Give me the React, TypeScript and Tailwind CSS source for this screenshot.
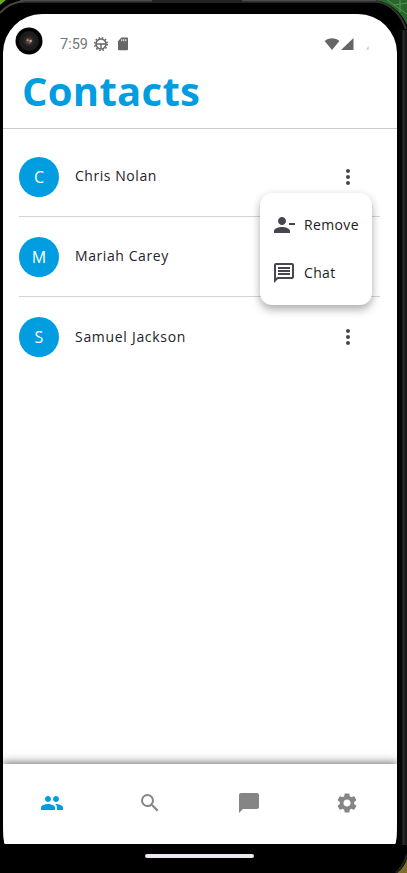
import React from "react";
import {
  MdChatBubble,
  MdMoreVert,
  MdOutlineMessage,
  MdPeople,
  MdPersonRemove,
  MdSearch,
  MdSettings,
} from "react-icons/md";

const contacts = [
  { name: "Chris Nolan", initial: "C", spacing: "tracking-[0.55px]" },
  { name: "Mariah Carey", initial: "M", spacing: "tracking-[0.58px]" },
  { name: "Samuel Jackson", initial: "S", spacing: "tracking-[0.7px]" },
];

function Camera() {
  return (
    <svg className="-ml-px block h-7 w-7 shrink-0" viewBox="0 0 28 28">
      <circle cx="14" cy="14" r="13.5" fill="#030303" />
      <circle cx="14" cy="14" r="10" fill="#1b1b1b" />
      <circle cx="14" cy="14" r="6" fill="#252526" />
      <circle cx="14" cy="14" r="3.5" fill="#483b38" />
      <circle cx="12.8" cy="13.2" r="1.2" fill="#a9806f" />
      <circle cx="15.6" cy="14" r="1.3" fill="#c9a997" />
      <circle cx="14.4" cy="15.8" r="1" fill="#7a5c50" />
    </svg>
  );
}

function StatusBar() {
  return (
    <div className="flex h-[50px] items-start pl-[13px] pt-[13px]">
      <Camera />
      <span className="ml-[17px] mt-[9px] font-['Roboto',sans-serif] text-[14.5px] leading-[18px] text-[#777]">
        7:59
      </span>
      <svg className="ml-[5px] mt-[9px] h-4 w-4" viewBox="0 0 16 16" fill="none" stroke="#666">
        <circle cx="8" cy="8" r="5" strokeWidth="1.6" />
        <circle cx="8" cy="8" r="6.3" strokeWidth="1.5" strokeDasharray="1.6 1.7" />
        <path d="M3.5 8h9M8 8v4.5" strokeWidth="1.5" />
      </svg>
      <svg className="ml-2 mt-[10px] h-[14px] w-[12px]" viewBox="0 0 12 14">
        <path d="M4.3.600H10a1 1 0 0 1 1 1v10.700a1 1 0 0 1-1 1H2a1 1 0 0 1-1-1V4.300z" fill="#666" />
        <path d="M4.800 2.200v2M6.800 2.200v2M8.800 2.200v2" stroke="#fff" strokeWidth="1" />
      </svg>
      <svg className="ml-auto mr-[26px] mt-[10px] h-[14px] w-[48px]" viewBox="0 0 48 14">
        <path d="M1.700 4C5.500.300 12.600.300 16.400 4L9 13z" fill="#666" />
        <path d="M30.500 1v12H18z" fill="#666" />
        <path d="M45.500 9v3.500h-2z" fill="#b5b5b5" />
      </svg>
    </div>
  );
}

function PopupMenu() {
  return (
    <div className="absolute left-[257px] top-[179px] flex h-28 w-28 flex-col rounded-xl bg-white py-2 text-[#1d1b20] shadow-[0_5px_8px_rgba(0,0,0,0.28),0_0_8px_rgba(0,0,0,0.07)]">
      <div className="flex h-12 items-center pl-3">
        <MdPersonRemove className="h-6 w-6 text-[#49454f]" />
        <span className="ml-2 text-[14px] font-medium leading-5 tracking-[0.35px]">Remove</span>
      </div>
      <div className="flex h-12 items-center pl-3">
        <MdOutlineMessage className="h-6 w-6 text-[#49454f]" />
        <span className="ml-2 text-[14px] font-medium leading-5 tracking-[0.35px]">Chat</span>
      </div>
    </div>
  );
}

export default function App() {
  return (
    <div className="relative h-[873px] w-[407px] overflow-hidden bg-black font-['Open_Sans','Noto_Sans',sans-serif]">
      {/* Scenery showing beyond the rounded corners of the handset */}
      <svg className="absolute inset-0" width="407" height="873">
        <defs>
          <linearGradient id="edge" x1="0" x2="1">
            <stop offset="0" stopColor="#000" />
            <stop offset=".45" stopColor="#090909" />
            <stop offset=".65" stopColor="#292a29" />
            <stop offset="1" stopColor="#111" />
          </linearGradient>
          <linearGradient id="rim" x1="0" y1="0" x2="0" y2="1">
            <stop offset="0" stopColor="#555" />
            <stop offset="1" stopColor="#151515" />
          </linearGradient>
        </defs>
        <rect x="397" y="30" width="10" height="815" fill="url(#edge)" />
        <rect x="20" y="0" width="360" height="3" fill="url(#rim)" />
        <rect x="152" y="0" width="90" height="2" fill="#242424" />
        <path d="M0 13Q8 3 24 1" fill="none" stroke="#454545" strokeWidth="2" />
        <path d="M0 0h6L0 5z" fill="#65a821" />
        <path d="M376 0Q398 5 407 25V0z" fill="#28672b" />
        <path d="M387 0l20 14M400 0v12M394 5l13-2" stroke="#58954b" strokeWidth="1" />
        <path d="M376 1Q398 6 406 29" fill="none" stroke="#323232" strokeWidth="2" />
        <path d="M407 858Q405 867 397 873h10z" fill="#806c29" />
        <path d="M407 854Q404 865 396 873" fill="none" stroke="#222" strokeWidth="2" />
      </svg>

      <main className="relative ml-[3px] mt-[14px] h-[829.5px] w-[394px] overflow-hidden rounded-t-[39px] bg-white [border-bottom-left-radius:2px_22px] [border-bottom-right-radius:2px_22px]">
        <header className="h-[115px] border-b border-[#cacaca]">
          <StatusBar />
          <h1 className="pl-[19px] text-[40px] font-bold leading-[54px] tracking-[0.3px] text-[#009de0]">
            Contacts
          </h1>
        </header>

        <ul className="ml-4 mr-[17px] pt-[8px]">
          {contacts.map((contact, index) => (
            <li
              key={contact.name}
              className={
                index < 2
                  ? "flex h-20 items-center border-b border-[#d3d3d3]"
                  : "flex h-20 items-center"
              }
            >
              <div className="flex h-10 w-10 items-center justify-center rounded-full bg-[#009de0] text-base font-medium text-white">
                {contact.initial}
              </div>
              <span className={`ml-4 pb-[2px] text-[14px] font-medium text-[#242329] ${contact.spacing}`}>
                {contact.name}
              </span>
              <MdMoreVert className="ml-auto mr-5 h-6 w-6 text-[#49454f]" />
            </li>
          ))}
        </ul>

        <PopupMenu />

        <nav className="absolute bottom-0 left-0 flex h-20 w-full items-center bg-white pb-px pr-px text-[#858585] shadow-[0_0_9px_1px_rgba(0,0,0,0.6)]">
          <div className="flex flex-1 justify-center text-[#009de0]">
            <MdPeople className="h-6 w-6" />
          </div>
          <div className="flex flex-1 justify-center">
            <MdSearch className="h-6 w-6" />
          </div>
          <div className="flex flex-1 justify-center">
            <MdChatBubble className="h-6 w-6" />
          </div>
          <div className="flex flex-1 justify-center">
            <MdSettings className="h-6 w-6" />
          </div>
        </nav>
      </main>
      <div className="relative mx-auto mt-[10px] h-1 w-[109px] -translate-x-1 rounded-full bg-[#eee9ee]" />
    </div>
  );
}
